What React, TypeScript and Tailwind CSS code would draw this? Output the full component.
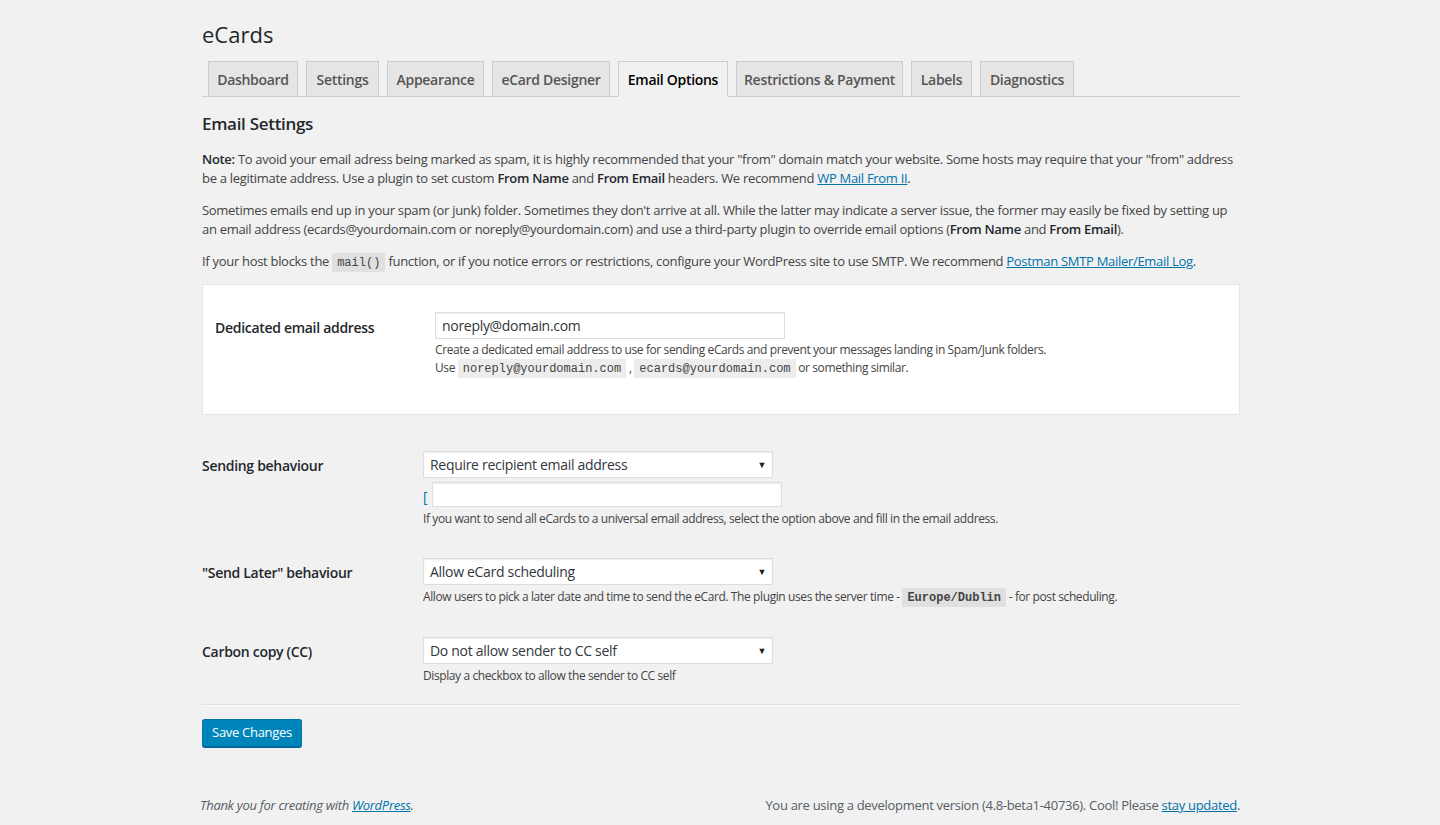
import React from 'react'

const tabs = [
  { label: 'Dashboard', w: 'w-[90px]' },
  { label: 'Settings', w: 'w-[73px]' },
  { label: 'Appearance', w: 'w-[97px]' },
  { label: 'eCard Designer', w: 'w-[118px]' },
  { label: 'Email Options', w: 'w-[110px]', active: true },
  { label: 'Restrictions & Payment', w: 'w-[167px]' },
  { label: 'Labels', w: 'w-[61px]' },
  { label: 'Diagnostics', w: 'w-[94px]' },
]

function Code({ children, bold, light }: { children: React.ReactNode; bold?: boolean; light?: boolean }) {
  return (
    <code
      className={`px-[5px] pt-[3px] pb-[2px] font-['Liberation_Mono',monospace] text-[12px] tracking-normal text-[#444] ${
        light ? 'bg-[#ededed]' : 'bg-[#e0e0e0]'
      } ${bold ? 'font-bold' : ''}`}
    >
      {children}
    </code>
  )
}

function Select({ value }: { value: string }) {
  return (
    <div className="flex h-[27px] w-[350px] items-center justify-between border border-[#ddd] bg-white pl-[6px] pr-[6px] text-[14px] text-[#32373c] shadow-[inset_0_1px_2px_rgba(0,0,0,0.07)]">
      <span>{value}</span>
      <span className="text-[9px] text-[#222]">▼</span>
    </div>
  )
}

function Row({ label, children }: { label: string; children: React.ReactNode }) {
  return (
    <div className="flex">
      <div className="w-[221px] shrink-0 pt-[5px] text-[14px] leading-[20px] font-semibold text-[#23282d]">{label}</div>
      <div>{children}</div>
    </div>
  )
}

const B = ({ children }: { children: React.ReactNode }) => <b className="font-semibold text-[#23282d]">{children}</b>

export default function App() {
  return (
    <div className="min-h-[825px] bg-[#f1f1f1] font-['Open_Sans',sans-serif] text-[13px] tracking-[-0.3px] text-[#444]">
      <div className="ml-[202px] w-[1038px] pt-[20px]">
        <h1 className="text-[22px] leading-[29px] font-normal tracking-normal text-[#23282d]">eCards</h1>

        <div className="mt-[12px] flex items-end gap-2 border-b border-[#ccc] pl-[6px]">
          {tabs.map((t) => (
            <div
              key={t.label}
              className={`-mb-px flex h-[36px] items-center justify-center border border-[#ccc] text-[14px] font-semibold ${t.w} ${
                t.active ? 'border-b-[#f1f1f1] bg-[#f1f1f1] text-black' : 'bg-[#e5e5e5] text-[#555]'
              }`}
            >
              {t.label}
            </div>
          ))}
        </div>

        <h2 className="mt-[16px] text-[17px] leading-[22px] font-semibold text-[#23282d]">Email Settings</h2>

        <p className="mt-[15px] leading-[19px] whitespace-nowrap">
          <B>Note:</B> To avoid your email adress being marked as spam, it is highly recommended that your "from" domain match your website. Some hosts may require that your "from" address
          <br />
          be a legitimate address. Use a plugin to set custom <B>From Name</B> and <B>From Email</B> headers. We recommend{' '}
          <a className="text-[#0073aa] underline">WP Mail From II</a>.
        </p>
        <p className="mt-[13px] leading-[19px] whitespace-nowrap">
          Sometimes emails end up in your spam (or junk) folder. Sometimes they don't arrive at all. While the latter may indicate a server issue, the former may easily be fixed by setting up
          <br />
          an email address (ecards@yourdomain.com or noreply@yourdomain.com) and use a third-party plugin to override email options (<B>From Name</B> and <B>From Email</B>).
        </p>
        <p className="mt-[13px] leading-[19px] whitespace-nowrap">
          If your host blocks the <Code>mail()</Code> function, or if you notice errors or restrictions, configure your WordPress site to use SMTP. We recommend{' '}
          <a className="text-[#0073aa] underline">Postman SMTP Mailer/Email Log</a>.
        </p>

        <div className="mt-[11px] border border-[#e5e5e5] bg-white pt-[27px] pb-[36px] pl-[12px]">
          <div className="flex">
            <div className="w-[220px] shrink-0 pt-[6px] text-[14px] leading-[20px] font-semibold text-[#23282d]">Dedicated email address</div>
            <div>
              <div className="flex h-[27px] w-[350px] items-center border border-[#ddd] bg-white px-[6px] text-[14px] text-[#32373c] shadow-[inset_0_1px_2px_rgba(0,0,0,0.07)]">
                noreply@domain.com
              </div>
              <div className="mt-[2px] text-[12px] leading-[18px] tracking-[-0.4px] whitespace-nowrap">
                <div>Create a dedicated email address to use for sending eCards and prevent your messages landing in Spam/Junk folders.</div>
                <div>
                  Use <Code light>noreply@yourdomain.com</Code> , <Code light>ecards@yourdomain.com</Code> or something similar.
                </div>
              </div>
            </div>
          </div>
        </div>

        <div className="mt-[36px]">
          <Row label="Sending behaviour">
            <Select value="Require recipient email address" />
            <div className="mt-[4px] flex items-end">
              <span className="w-[9px] text-[14px] leading-[20px] text-[#0073aa]">[</span>
              <div className="h-[25px] w-[350px] border border-[#ddd] bg-white shadow-[inset_0_1px_2px_rgba(0,0,0,0.07)]" />
            </div>
            <div className="mt-[3px] text-[12px] leading-[18px] tracking-[-0.4px] whitespace-nowrap">
              If you want to send all eCards to a universal email address, select the option above and fill in the email address.
            </div>
          </Row>
        </div>

        <div className="mt-[30px]">
          <Row label={'"Send Later" behaviour'}>
            <Select value="Allow eCard scheduling" />
            <div className="mt-[3px] text-[12px] leading-[18px] tracking-[-0.4px] whitespace-nowrap">
              Allow users to pick a later date and time to send the eCard. The plugin uses the server time - <Code bold>Europe/Dublin</Code> - for post scheduling.
            </div>
          </Row>
        </div>

        <div className="mt-[30px]">
          <Row label="Carbon copy (CC)">
            <Select value="Do not allow sender to CC self" />
            <div className="mt-[3px] text-[12px] leading-[18px] tracking-[-0.4px]">Display a checkbox to allow the sender to CC self</div>
          </Row>
        </div>

        <hr className="mt-[19px] border-t border-b border-t-[#ddd] border-b-[#fafafa]" />

        <button className="mt-[13px] h-[28px] w-[100px] rounded-[3px] border border-[#0073aa] border-b-[#006799] bg-[#0085ba] text-[13px] text-white shadow-[0_1px_0_#006799]">
          Save Changes
        </button>

        <div className="mt-[49px] flex justify-between leading-[19px] whitespace-nowrap text-[#555d66]">
          <span className="-ml-[2px] italic">
            Thank you for creating with <a className="text-[#0073aa] underline">WordPress</a>.
          </span>
          <span>
            You are using a development version (4.8-beta1-40736). Cool! Please <a className="text-[#0073aa] underline">stay updated</a>.
          </span>
        </div>
      </div>
    </div>
  )
}
